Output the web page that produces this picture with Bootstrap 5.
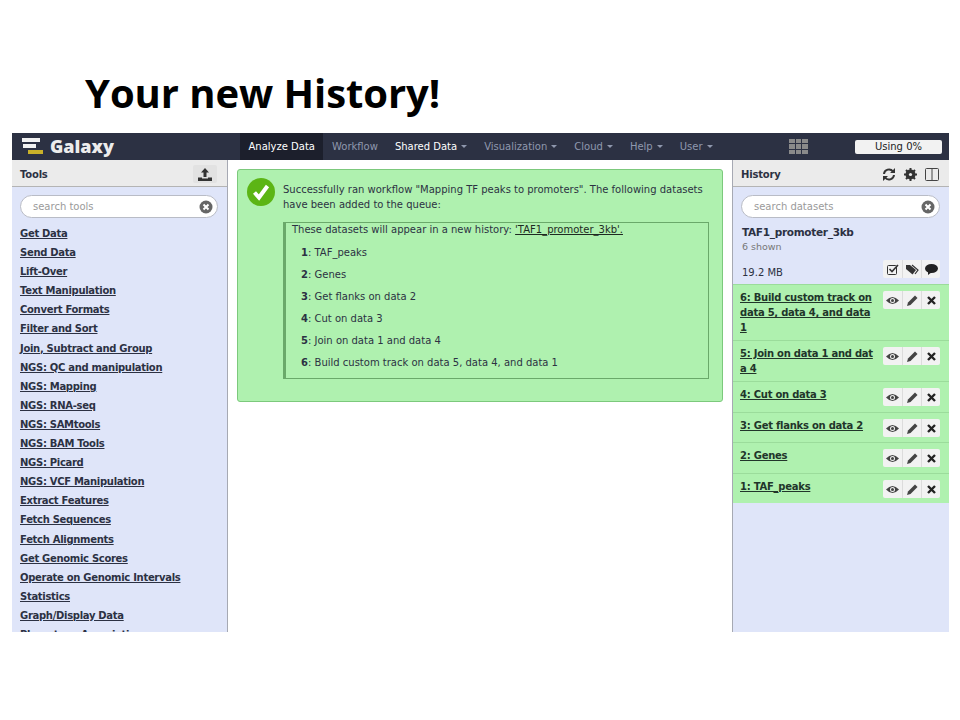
<!doctype html>
<html lang="en"><head><meta charset="utf-8"><title>Your new History!</title>
<link href="https://cdn.jsdelivr.net/npm/bootstrap@5.3.0/dist/css/bootstrap.min.css" rel="stylesheet">
<style>
html,body{height:720px;overflow:hidden;background:#fff}
body{font-family:"DejaVu Sans",sans-serif;font-size:10px;color:#2c3143;padding:0 11px 0 12px}
.slide-title{font-family:"Open Sans",sans-serif;font-weight:700;font-size:40px;line-height:54px;height:133px;padding:66px 0 0 73px;color:#000;letter-spacing:-.07px;margin:0;box-sizing:border-box}
.gx-app{height:499px;width:937px;overflow:hidden}
.gx-mast{height:27px;background:#2c3143;color:#fff}
.gx-brand{width:228px;font-family:"Open Sans",sans-serif;font-weight:800;font-size:18px;padding-left:10px;gap:7px;color:#ececec}
.gx-nav{font-size:10px;color:#8f98ae;height:27px;padding:0 8.5px}
.gx-nav.on{background:#1c1f2c;color:#fff;font-weight:500}
.gx-nav.wht{color:#fff}
.gx-nav.wht .gx-caret{color:#8f98ae}
.gx-caret{display:inline-block;border-top:3px solid currentColor;border-left:3px solid transparent;border-right:3px solid transparent;margin-left:4px;vertical-align:middle}
.gx-grid{margin-left:68px;width:19px;height:15px;display:grid;grid-template-columns:repeat(3,1fr);gap:1px}
.gx-grid i{background:#8a8a8a}
.gx-quota{margin-left:auto;margin-right:7px;width:87px;height:14px;background:#f2f2f2;color:#222;border-radius:2px;font-size:10px;line-height:14px;text-align:center}
.gx-body{height:472px}
.gx-left{width:216px;flex:none;background:#dfe5f9;border-right:1px solid #a6a9b3;overflow:hidden}
.gx-right{width:217px;flex:none;background:#dfe5f9;border-left:1px solid #a6a9b3;overflow:hidden}
.gx-center{flex:1;padding:9px 9px 0;background:#fff;min-width:0}
.gx-phead{height:27px;background:#ebebeb;border-bottom:1px solid #b4b4b4;padding:2px 10px 0 8px;font-size:10px;font-weight:600;letter-spacing:-.2px;color:#2c3143}
.gx-upload{width:24px;height:18px;background:#e2e2e2;border-radius:2px;margin-right:0}
.gx-search{height:23px;margin:8px 9px 0 8px;border:1px solid #b9bcc6;border-radius:12px;background:#fff;padding:0 4px 0 12px;color:#9a9a9a;font-size:10px}
.gx-tools{padding:6px 8px 0;margin:0}
.gx-tools a{display:block;height:19.1px;line-height:19.1px;font-weight:600;font-size:10px;letter-spacing:-.3px;color:#2c3143;text-decoration:underline;white-space:nowrap}
.gx-ok{height:233px;background:#aff1af;border:1px solid #7cc97c;border-radius:3px;padding:12px 13px 0 9px}
.gx-tick{width:28px;height:28px;flex:none;margin-top:-4px}
.gx-msg{margin-left:8px;line-height:15px}
.gx-box{margin:10px 0 0 36px;height:157px;width:426px;border:1px solid #6aa96a;border-left:3px solid #6aa96a;padding:0 6px}
.gx-box .gx-hl{line-height:13px}
.gx-box a,.gx-hname a{color:#1e2a22}
.gx-steps{margin:6px 0 0;padding:0 0 0 9px}
.gx-steps div{height:22px;line-height:22px}
.gx-steps b{font-weight:600}
.gx-hname{font-weight:600;font-size:10.5px;letter-spacing:-.3px;color:#2c3143;padding:6px 9px 0 9px;line-height:16px}
.gx-shown{font-size:9.5px;color:#777;padding:0 9px 0 9px;line-height:14px}
.gx-size{padding:6px 9px 0 9px;height:30px;color:#2c3143}
.gx-btns{display:flex;background:#f2f2f2;border-radius:2px;height:18px;flex:none}
.gx-btns span{width:19px;display:flex;align-items:center;justify-content:center;border-left:1px solid #dcdcdc}
.gx-btns span:first-child{border-left:0}
.gx-ds{background:#aff1af;border-top:1px solid #9bdc9b;padding:5px 9px 0 7px;font-weight:600;letter-spacing:-.25px;line-height:15px}
.gx-ds a{color:#21352a;text-decoration:underline;word-break:break-all;flex:1;padding-right:9px}
.gx-ds .gx-btns{margin-top:1px}
.h56{height:56px}.h41{height:41px}.h31{height:31px}.h30{height:30px}
</style></head>
<body>
<h1 class="slide-title">Your new History!</h1>
<div class="gx-app">
 <div class="gx-mast d-flex align-items-center">
  <div class="gx-brand d-flex align-items-center">
   <svg width="21" height="17" viewBox="0 0 21 17"><rect x="0" y="0" width="18" height="4" fill="#f1f1f1"/><rect x="1" y="6" width="13" height="4" fill="#f1f1f1"/><rect x="6" y="12" width="15" height="4" fill="#c9b12a"/></svg>
   <span>Galaxy</span>
  </div>
  <div class="gx-nav on d-flex align-items-center">Analyze Data</div>
  <div class="gx-nav d-flex align-items-center">Workflow</div>
  <div class="gx-nav wht d-flex align-items-center">Shared Data<span class="gx-caret"></span></div>
  <div class="gx-nav d-flex align-items-center">Visualization<span class="gx-caret"></span></div>
  <div class="gx-nav d-flex align-items-center">Cloud<span class="gx-caret"></span></div>
  <div class="gx-nav d-flex align-items-center">Help<span class="gx-caret"></span></div>
  <div class="gx-nav d-flex align-items-center">User<span class="gx-caret"></span></div>
  <div class="gx-grid"><i></i><i></i><i></i><i></i><i></i><i></i><i></i><i></i><i></i></div>
  <div class="gx-quota">Using 0%</div>
 </div>
 <div class="gx-body d-flex">
  <div class="gx-left">
   <div class="gx-phead d-flex align-items-center justify-content-between"><span>Tools</span>
    <span class="gx-upload d-flex align-items-center justify-content-center"><svg width="14" height="13" viewBox="0 0 14 13"><path d="M7 0l4 4.500H8.500V9h-3V4.500H3z" fill="#333"/><path d="M0 9.500h4V10.500h6V9.500h4V13H0z" fill="#333"/></svg></span></div>
   <div class="gx-search d-flex align-items-center justify-content-between"><span>search tools</span>
    <svg width="14" height="14" viewBox="0 0 14 14"><circle cx="7" cy="7" r="6.500" fill="#666"/><path d="M4.500 4.500l5 5M9.500 4.500l-5 5" stroke="#fff" stroke-width="2"/></svg></div>
   <div class="gx-tools">
    <a href="#">Get Data</a><a href="#">Send Data</a><a href="#">Lift-Over</a><a href="#">Text Manipulation</a><a href="#">Convert Formats</a><a href="#">Filter and Sort</a><a href="#">Join, Subtract and Group</a><a href="#">NGS: QC and manipulation</a><a href="#">NGS: Mapping</a><a href="#">NGS: RNA-seq</a><a href="#">NGS: SAMtools</a><a href="#">NGS: BAM Tools</a><a href="#">NGS: Picard</a><a href="#">NGS: VCF Manipulation</a><a href="#">Extract Features</a><a href="#">Fetch Sequences</a><a href="#">Fetch Alignments</a><a href="#">Get Genomic Scores</a><a href="#">Operate on Genomic Intervals</a><a href="#">Statistics</a><a href="#">Graph/Display Data</a><a href="#">Phenotype Association</a>
   </div>
  </div>
  <div class="gx-center">
   <div class="gx-ok">
    <div class="d-flex">
     <svg class="gx-tick" viewBox="0 0 28 28"><circle cx="14" cy="14" r="14" fill="#5cb515"/><path d="M7.500 14.500l4.500 5L20.500 8" fill="none" stroke="#fff" stroke-width="4"/></svg>
     <div class="gx-msg">Successfully ran workflow "Mapping TF peaks to promoters". The following datasets have been added to the queue:</div>
    </div>
    <div class="gx-box">
     <div class="gx-hl">These datasets will appear in a new history: <a href="#">'TAF1_promoter_3kb'.</a></div>
     <div class="gx-steps">
      <div><b>1</b>: TAF_peaks</div><div><b>2</b>: Genes</div><div><b>3</b>: Get flanks on data 2</div><div><b>4</b>: Cut on data 3</div><div><b>5</b>: Join on data 1 and data 4</div><div><b>6</b>: Build custom track on data 5, data 4, and data 1</div>
     </div>
    </div>
   </div>
  </div>
  <div class="gx-right">
   <div class="gx-phead d-flex align-items-center justify-content-between"><span>History</span>
    <span class="d-flex align-items-center gap-2">
     <svg width="14" height="13" viewBox="0 0 14 13"><path d="M2 6a5 5 0 0 1 9-2.500M12 7a5 5 0 0 1-9 2.500" fill="none" stroke="#333" stroke-width="2"/><path d="M13 0v5H8zM1 13V8h5z" fill="#333"/></svg>
     <svg width="13" height="13" viewBox="0 0 13 13"><circle cx="6.500" cy="6.500" r="3.500" fill="none" stroke="#333" stroke-width="3"/><path d="M6.500 0v13M0 6.500h13M2 2l9 9M11 2l-9 9" stroke="#333" stroke-width="2"/><circle cx="6.500" cy="6.500" r="1.600" fill="#ebebeb"/></svg>
     <svg width="14" height="13" viewBox="0 0 14 13"><rect x=".5" y=".5" width="13" height="12" rx="1" fill="none" stroke="#444"/><path d="M7 .5v12" stroke="#444"/></svg>
    </span></div>
   <div class="gx-search d-flex align-items-center justify-content-between"><span>search datasets</span>
    <svg width="14" height="14" viewBox="0 0 14 14"><circle cx="7" cy="7" r="6.500" fill="#666"/><path d="M4.500 4.500l5 5M9.500 4.500l-5 5" stroke="#fff" stroke-width="2"/></svg></div>
   <div class="gx-hname">TAF1_promoter_3kb</div>
   <div class="gx-shown">6 shown</div>
   <div class="gx-size d-flex justify-content-between"><span class="align-self-center">19.2 MB</span>
    <span class="gx-btns">
     <span><svg width="12" height="11" viewBox="0 0 12 11"><rect x=".5" y="1.500" width="9" height="9" rx="1" fill="none" stroke="#333"/><path d="M2.500 5l2.500 2.500L11 1" fill="none" stroke="#333" stroke-width="1.600"/></svg></span>
     <span><svg width="13" height="11" viewBox="0 0 13 11"><path d="M0 1h4l6 5-3.500 4.500L0 5z" fill="#333"/><path d="M6 1l6 5-3 4" fill="none" stroke="#333" stroke-width="1.200"/></svg></span>
     <span><svg width="13" height="11" viewBox="0 0 13 11"><ellipse cx="6.500" cy="4.500" rx="6.500" ry="4.500" fill="#222"/><path d="M3 7v4l4-3z" fill="#222"/></svg></span>
    </span></div>
   <div class="gx-ds d-flex h56"><a href="#">6: Build custom track on data 5, data 4, and data 1</a>
    <span class="gx-btns"><span><svg width="13" height="9" viewBox="0 0 13 9"><path d="M0 4.500Q6.500-2.500 13 4.500Q6.500 11.500 0 4.500z" fill="#444"/><circle cx="6.500" cy="4.500" r="2.500" fill="#f2f2f2"/><circle cx="6.500" cy="4.500" r="1.500" fill="#444"/></svg></span><span><svg width="11" height="11" viewBox="0 0 11 11"><path d="M0 11l1-3.500L8 .5l2.500 2.500-7 7z" fill="#444"/></svg></span><span><svg width="9" height="9" viewBox="0 0 9 9"><path d="M1 1l7 7M8 1l-7 7" stroke="#222" stroke-width="2.400"/></svg></span></span></div>
   <div class="gx-ds d-flex h41"><a href="#">5: Join on data 1 and data 4</a>
    <span class="gx-btns"><span><svg width="13" height="9" viewBox="0 0 13 9"><path d="M0 4.500Q6.500-2.500 13 4.500Q6.500 11.500 0 4.500z" fill="#444"/><circle cx="6.500" cy="4.500" r="2.500" fill="#f2f2f2"/><circle cx="6.500" cy="4.500" r="1.500" fill="#444"/></svg></span><span><svg width="11" height="11" viewBox="0 0 11 11"><path d="M0 11l1-3.500L8 .5l2.500 2.500-7 7z" fill="#444"/></svg></span><span><svg width="9" height="9" viewBox="0 0 9 9"><path d="M1 1l7 7M8 1l-7 7" stroke="#222" stroke-width="2.400"/></svg></span></span></div>
   <div class="gx-ds d-flex h31"><a href="#">4: Cut on data 3</a>
    <span class="gx-btns"><span><svg width="13" height="9" viewBox="0 0 13 9"><path d="M0 4.500Q6.500-2.500 13 4.500Q6.500 11.500 0 4.500z" fill="#444"/><circle cx="6.500" cy="4.500" r="2.500" fill="#f2f2f2"/><circle cx="6.500" cy="4.500" r="1.500" fill="#444"/></svg></span><span><svg width="11" height="11" viewBox="0 0 11 11"><path d="M0 11l1-3.500L8 .5l2.500 2.500-7 7z" fill="#444"/></svg></span><span><svg width="9" height="9" viewBox="0 0 9 9"><path d="M1 1l7 7M8 1l-7 7" stroke="#222" stroke-width="2.400"/></svg></span></span></div>
   <div class="gx-ds d-flex h30"><a href="#">3: Get flanks on data 2</a>
    <span class="gx-btns"><span><svg width="13" height="9" viewBox="0 0 13 9"><path d="M0 4.500Q6.500-2.500 13 4.500Q6.500 11.500 0 4.500z" fill="#444"/><circle cx="6.500" cy="4.500" r="2.500" fill="#f2f2f2"/><circle cx="6.500" cy="4.500" r="1.500" fill="#444"/></svg></span><span><svg width="11" height="11" viewBox="0 0 11 11"><path d="M0 11l1-3.500L8 .5l2.500 2.500-7 7z" fill="#444"/></svg></span><span><svg width="9" height="9" viewBox="0 0 9 9"><path d="M1 1l7 7M8 1l-7 7" stroke="#222" stroke-width="2.400"/></svg></span></span></div>
   <div class="gx-ds d-flex h31"><a href="#">2: Genes</a>
    <span class="gx-btns"><span><svg width="13" height="9" viewBox="0 0 13 9"><path d="M0 4.500Q6.500-2.500 13 4.500Q6.500 11.500 0 4.500z" fill="#444"/><circle cx="6.500" cy="4.500" r="2.500" fill="#f2f2f2"/><circle cx="6.500" cy="4.500" r="1.500" fill="#444"/></svg></span><span><svg width="11" height="11" viewBox="0 0 11 11"><path d="M0 11l1-3.500L8 .5l2.500 2.500-7 7z" fill="#444"/></svg></span><span><svg width="9" height="9" viewBox="0 0 9 9"><path d="M1 1l7 7M8 1l-7 7" stroke="#222" stroke-width="2.400"/></svg></span></span></div>
   <div class="gx-ds d-flex h30"><a href="#">1: TAF_peaks</a>
    <span class="gx-btns"><span><svg width="13" height="9" viewBox="0 0 13 9"><path d="M0 4.500Q6.500-2.500 13 4.500Q6.500 11.500 0 4.500z" fill="#444"/><circle cx="6.500" cy="4.500" r="2.500" fill="#f2f2f2"/><circle cx="6.500" cy="4.500" r="1.500" fill="#444"/></svg></span><span><svg width="11" height="11" viewBox="0 0 11 11"><path d="M0 11l1-3.500L8 .5l2.500 2.500-7 7z" fill="#444"/></svg></span><span><svg width="9" height="9" viewBox="0 0 9 9"><path d="M1 1l7 7M8 1l-7 7" stroke="#222" stroke-width="2.400"/></svg></span></span></div>
  </div>
 </div>
</div>
<script src="https://cdn.jsdelivr.net/npm/bootstrap@5.3.0/dist/js/bootstrap.bundle.min.js"></script>
</body></html>
